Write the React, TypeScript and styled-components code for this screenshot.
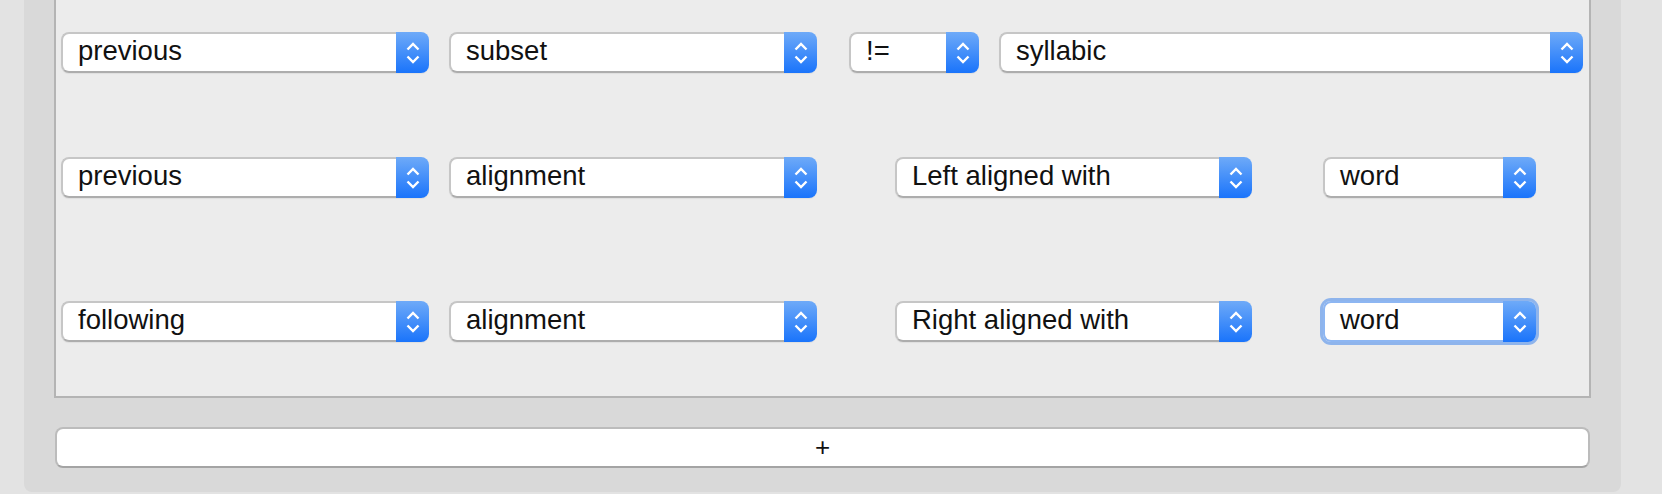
import React from 'react';
import styled, { createGlobalStyle, css } from 'styled-components';

const colors = {
  page: '#e3e3e3',
  panel: '#d9d9d9',
  box: '#ececec',
  boxBorder: '#b4b4b4',
  field: '#ffffff',
  fieldBorder: '#c6c6c6',
  fieldBorderBottom: '#adadad',
  text: '#111111',
  blueTop: '#6eaaf8',
  blueBottom: '#1a74fb',
  focus: 'rgba(92, 150, 236, 0.65)',
};

const GlobalStyle = createGlobalStyle`
  html,
  body {
    margin: 0;
    padding: 0;
    background-color: ${colors.page};
    font-family: 'Liberation Sans', Arial, sans-serif;
  }
`;

const Page = styled.div`
  display: flex;
  height: 494px;
  padding: 0 41px 0 24px;
  box-sizing: border-box;
  overflow: hidden;
`;

const Panel = styled.div`
  flex: 1;
  display: flex;
  flex-direction: column;
  height: 492px;
  padding: 0 30px 24px;
  box-sizing: border-box;
  background-color: ${colors.panel};
  border-radius: 0 0 8px 8px;
`;

const RulesBox = styled.div`
  display: flex;
  flex-direction: column;
  padding: 32px 0 0 5px;
  height: 398px;
  box-sizing: border-box;
  background-color: ${colors.box};
  border: 2px solid ${colors.boxBorder};
  border-top: none;
`;

const Row = styled.div<{ offsetTop: number }>`
  display: flex;
  align-items: center;
  margin-top: ${({ offsetTop }) => offsetTop}px;
`;

const SelectBox = styled.div<{ width: number; offsetLeft: number; isFocused?: boolean }>`
  display: flex;
  flex-shrink: 0;
  width: ${({ width }) => width}px;
  height: 41px;
  margin-left: ${({ offsetLeft }) => offsetLeft}px;
  border-radius: 8px;
  box-shadow: 0 1px 1px rgba(0, 0, 0, 0.06);
  cursor: default;

  ${({ isFocused }) =>
    isFocused &&
    css`
      box-shadow: 0 0 0 3px ${colors.focus};
    `}
`;

const Field = styled.div<{ isFocused?: boolean }>`
  flex: 1;
  display: flex;
  align-items: center;
  padding: 0 0 3px 15px;
  background-color: ${colors.field};
  border: 2px solid ${({ isFocused }) => (isFocused ? '#8db6f2' : colors.fieldBorder)};
  border-bottom-color: ${({ isFocused }) => (isFocused ? '#8db6f2' : colors.fieldBorderBottom)};
  border-right: none;
  border-radius: 8px 0 0 8px;
  font-size: 27.5px;
  color: ${colors.text};
  white-space: nowrap;
  overflow: hidden;
`;

const Stepper = styled.div`
  display: flex;
  justify-content: center;
  align-items: center;
  width: 33px;
  background: linear-gradient(${colors.blueTop}, ${colors.blueBottom});
  border-radius: 0 8px 8px 0;
`;

const AddButton = styled.button`
  display: flex;
  justify-content: center;
  align-items: center;
  height: 41px;
  margin: 29px 1px 0;
  padding: 0 0 1px;
  font-family: 'Liberation Sans', Arial, sans-serif;
  font-size: 26px;
  color: #111;
  background-color: ${colors.field};
  border: 2px solid #bcbcbc;
  border-bottom-color: #a4a4a4;
  border-radius: 8px;
`;

const Chevrons = () => (
  <svg width="16" height="24" viewBox="0 0 16 24">
    <polyline
      points="2.5,8.5 8,3 13.5,8.5"
      fill="none"
      stroke="#fff"
      strokeWidth="2.4"
    />
    <polyline
      points="2.5,15.5 8,21 13.5,15.5"
      fill="none"
      stroke="#fff"
      strokeWidth="2.4"
    />
  </svg>
);

interface SelectProps {
  value: string;
  width: number;
  offsetLeft?: number;
  isFocused?: boolean;
}

const Select = ({ value, width, offsetLeft = 0, isFocused }: SelectProps) => (
  <SelectBox width={width} offsetLeft={offsetLeft} isFocused={isFocused}>
    <Field isFocused={isFocused}>{value}</Field>
    <Stepper>
      <Chevrons />
    </Stepper>
  </SelectBox>
);

export default function App() {
  return (
    <>
      <GlobalStyle />
      <Page>
        <Panel>
          <RulesBox>
            <Row offsetTop={0}>
              <Select value="previous" width={368} />
              <Select value="subset" width={368} offsetLeft={20} />
              <Select value="!=" width={130} offsetLeft={32} />
              <Select value="syllabic" width={584} offsetLeft={20} />
            </Row>
            <Row offsetTop={84}>
              <Select value="previous" width={368} />
              <Select value="alignment" width={368} offsetLeft={20} />
              <Select value="Left aligned with" width={357} offsetLeft={78} />
              <Select value="word" width={213} offsetLeft={71} />
            </Row>
            <Row offsetTop={103}>
              <Select value="following" width={368} />
              <Select value="alignment" width={368} offsetLeft={20} />
              <Select value="Right aligned with" width={357} offsetLeft={78} />
              <Select value="word" width={213} offsetLeft={71} isFocused />
            </Row>
          </RulesBox>
          <AddButton type="button">+</AddButton>
        </Panel>
      </Page>
    </>
  );
}
